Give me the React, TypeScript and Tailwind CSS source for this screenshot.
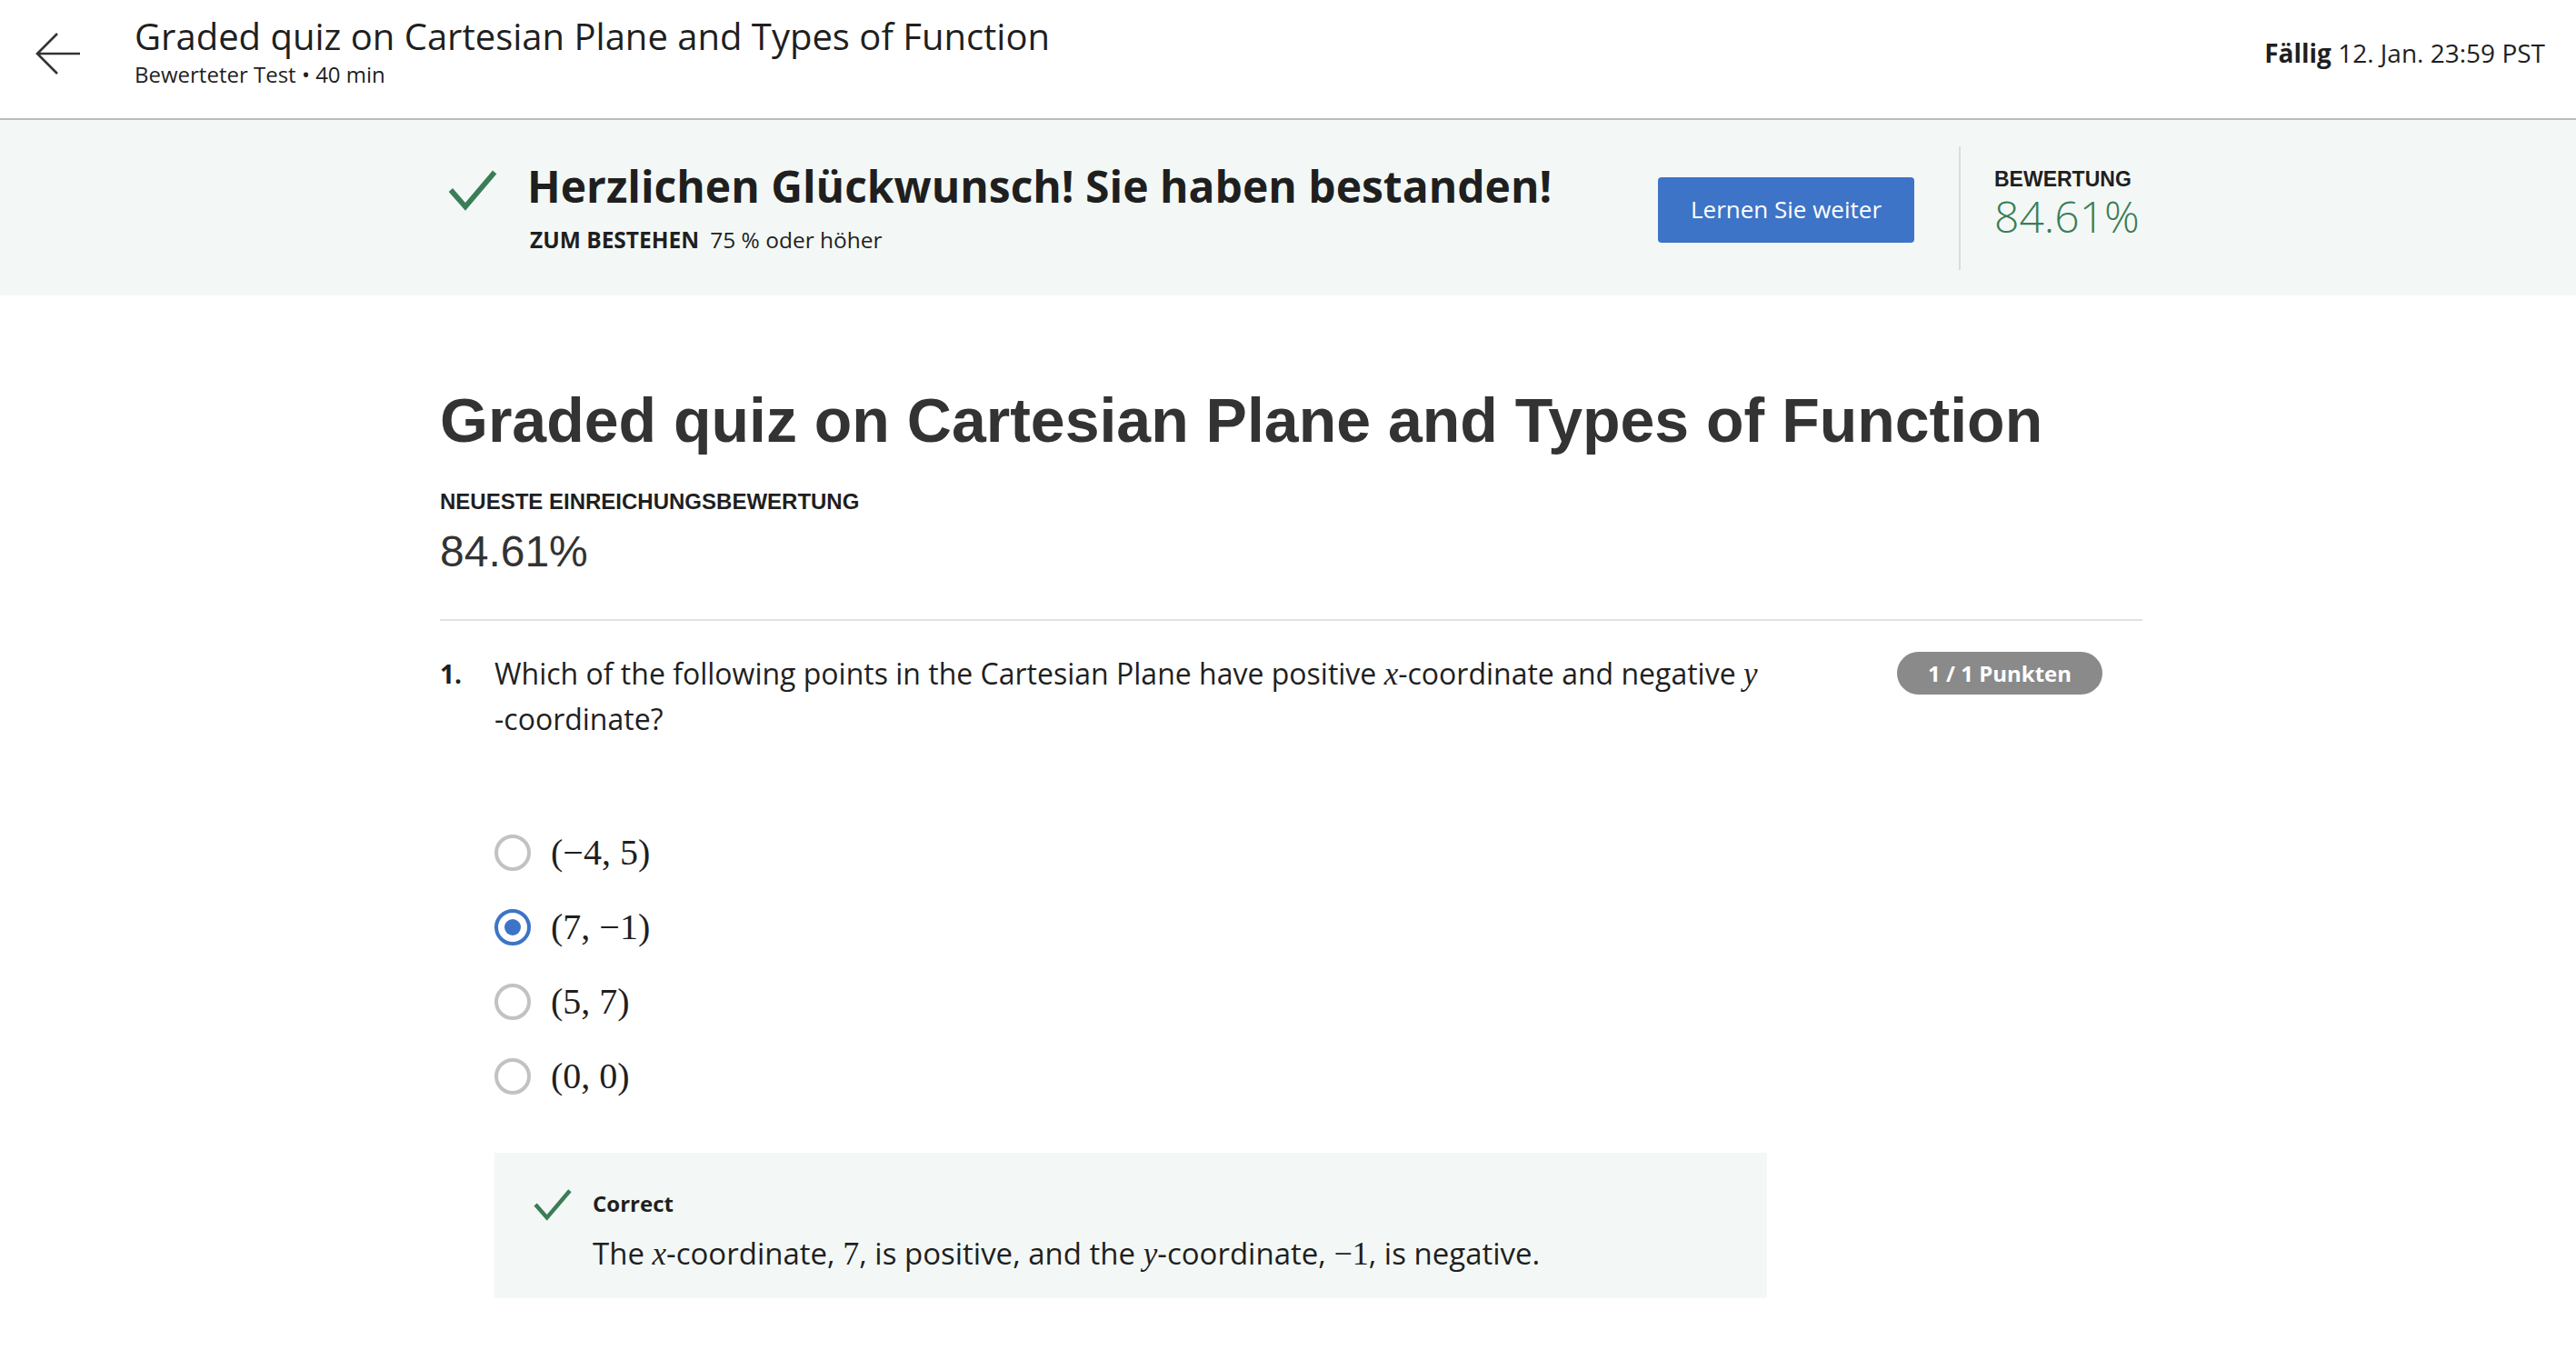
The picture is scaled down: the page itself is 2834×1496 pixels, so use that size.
import React from 'react';

const openSans = "font-['Open_Sans','Noto_Sans',sans-serif]";
const arial = "font-['Liberation_Sans',Arial,sans-serif]";
const serif = "font-['Liberation_Serif','Times_New_Roman',serif]";

function Check({ className }: { className?: string }) {
  return (
    <svg viewBox="0 0 48 40" className={className} fill="none">
      <path d="M3 20 L17 36 L45 3" stroke="#3b7d57" strokeWidth="5" strokeLinejoin="miter" />
    </svg>
  );
}

function MathVar({ children, size = 'text-[35px]' }: { children: React.ReactNode; size?: string }) {
  return <span className={`${serif} italic ${size}`}>{children}</span>;
}

function Radio({ checked }: { checked?: boolean }) {
  return checked ? (
    <div className="w-[40px] h-[40px] rounded-full border-[4px] border-[#3d74c7] flex items-center justify-center shrink-0">
      <div className="w-[18px] h-[18px] rounded-full bg-[#3d74c7]" />
    </div>
  ) : (
    <div className="w-[40px] h-[40px] rounded-full border-[4px] border-[#c2c2c2] shrink-0" />
  );
}

const options = [
  { label: '(−4, 5)', checked: false },
  { label: '(7, −1)', checked: true },
  { label: '(5, 7)', checked: false },
  { label: '(0, 0)', checked: false },
];

export default function App() {
  return (
    <div className={`min-h-screen bg-white text-[#1f1f1f] ${openSans}`}>
      {/* top bar */}
      <header className="h-[132px] border-b-2 border-[#b8bebc] flex items-start">
        <button className="mt-[34px] ml-[38px] w-[52px] h-[50px] flex items-center justify-center">
          <svg viewBox="0 0 52 50" className="w-[52px] h-[50px]" fill="none">
            <path d="M50 25 H4 M25 3 L3 25 L25 47" stroke="#333" strokeWidth="2.6" />
          </svg>
        </button>
        <div className="ml-[58px] mt-[14px]">
          <div className="text-[40px] leading-[52px] text-[#1f1f1f]">Graded quiz on Cartesian Plane and Types of Function</div>
          <div className="text-[24px] leading-[32px] text-[#1f1f1f]">Bewerteter Test • 40 min</div>
        </div>
        <div className="ml-auto mr-[34px] mt-[38px] text-[28px] leading-[40px] text-[#1f1f1f]">
          <span className="font-bold">Fällig</span> 12. Jan. 23:59 PST
        </div>
      </header>

      {/* pass banner */}
      <section className="bg-[#f3f8f6] h-[193px]">
        <div className="ml-[484px] w-[1873px] h-full flex items-center">
          <div className="flex items-start pl-[8px] -mt-[4px]">
            <Check className="w-[56px] h-[46px] mt-[12px]" />
            <div className="ml-[32px]">
              <div className="text-[48px] leading-[62px] font-bold text-[#1f1f1f]">
                Herzlichen Glückwunsch! Sie haben bestanden!
              </div>
              <div className="text-[24.5px] leading-[32px] mt-[12px] ml-[3px]">
                <span className="font-bold">ZUM BESTEHEN</span>
                <span className="ml-[12px]">75 % oder höher</span>
              </div>
            </div>
          </div>
          <button className="ml-auto w-[282px] h-[72px] mt-[4px] rounded-[4px] bg-[#3d74c7] text-white text-[26px] font-medium">
            Lernen Sie weiter
          </button>
          <div className="w-[2px] h-[136px] bg-[#d9dedc] ml-[49px]" />
          <div className="ml-[37px] w-[163px] -mt-[8px]">
            <div className={`${arial} font-bold text-[23px] leading-[26px] text-[#1f1f1f]`}>BEWERTUNG</div>
            <div className="text-[48px] leading-[56px] text-[#3b7d57] font-light">84.61%</div>
          </div>
        </div>
      </section>

      {/* main content */}
      <main className="ml-[484px] w-[1873px] pt-[96px]">
        <h1 className={`${arial} font-bold text-[68px] leading-[82px] text-[#333]`}>
          Graded quiz on Cartesian Plane and Types of Function
        </h1>
        <div className={`${arial} font-bold text-[24px] leading-[28px] mt-[35px] text-[#1f1f1f]`}>
          NEUESTE EINREICHUNGSBEWERTUNG
        </div>
        <div className={`${arial} text-[48px] leading-[58px] mt-[12px] text-[#333]`}>84.61%</div>
        <div className="h-[2px] bg-[#e1e1e1] mt-[45px]" />

        <div className="flex items-start pt-[33px]">
          <div className="w-[60px] text-[28px] leading-[50px] font-bold">1.</div>
          <div className="w-[1400px]">
            <p className="text-[32px] leading-[49px] text-[#1f1f1f]">
              <span className="whitespace-nowrap">
                Which of the following points in the Cartesian Plane have positive <MathVar>x</MathVar>-coordinate and negative <MathVar>y</MathVar>
              </span>
              <br />-coordinate?
            </p>

            <div className="mt-[103px] flex flex-col gap-[42px]">
              {options.map((o) => (
                <div key={o.label} className="flex items-center h-[40px]">
                  <Radio checked={o.checked} />
                  <span className={`${serif} text-[40px] leading-[40px] ml-[22px] text-[#1f1f1f]`}>{o.label}</span>
                </div>
              ))}
            </div>

            <div className="mt-[64px] bg-[#f3f8f6] h-[160px] flex items-start pl-[42px] pt-[41px]">
              <Check className="w-[44px] h-[36px] -mt-[2px]" />
              <div className="ml-[22px]">
                <div className="text-[24px] leading-[30px] font-bold">Correct</div>
                <div className="text-[33px] leading-[44px] mt-[18px] text-[#1f1f1f]">
                  The <MathVar>x</MathVar>-coordinate, <span className={`${serif} text-[36px]`}>7</span>, is positive, and the <MathVar>y</MathVar>-coordinate, <span className={`${serif} text-[36px]`}>−1</span>, is negative.
                </div>
              </div>
            </div>
          </div>
          <div className="ml-auto mr-[44px] mt-[1px] h-[47px] px-[34px] rounded-full bg-[#8a8a8a] text-white text-[24px] font-bold flex items-center">
            1 / 1 Punkten
          </div>
        </div>
      </main>
    </div>
  );
}
